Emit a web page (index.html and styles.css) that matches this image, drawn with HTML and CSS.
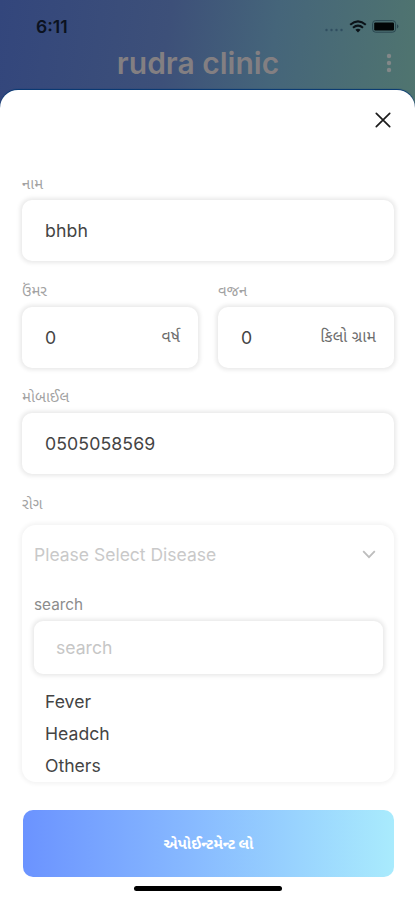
FILE: index.html
```
<!DOCTYPE html>
<html lang="gu">
<head>
<meta charset="utf-8">
<title>rudra clinic</title>
<link rel="stylesheet" href="styles.css">
</head>
<body>
<div class="phone">
  <header class="top">
    <div class="status">
      <span class="time">6:11</span>
      <span class="indicators">
        <svg class="dots" width="20" height="4" viewBox="0 0 20 4"><circle cx="2.5" cy="2" r="1.2"/><circle cx="7.5" cy="2" r="1.2"/><circle cx="12.5" cy="2" r="1.2"/><circle cx="17.5" cy="2" r="1.2"/></svg>
        <svg class="wifi" width="18" height="13" viewBox="0 0 18 13"><path d="M1.2 4.8Q9-2 16.8 4.8M4 7.7q5-4.3 10 0" fill="none" stroke="#0b1218" stroke-width="2.1"/><path d="M6.4 9.8q2.6-2 5.2 0L9 12.4z" fill="#0b1218"/></svg>
        <svg class="battery" width="28" height="13" viewBox="0 0 28 13"><rect x=".6" y=".6" width="23" height="11.6" rx="3" fill="none" stroke="#2a4650"/><rect x="2.2" y="2.4" width="19.8" height="8" rx="1.2" fill="#020506"/><path d="M25 4.2q3 2.2 0 4.4z" fill="#2a4650"/></svg>
      </span>
    </div>
    <div class="titlebar">
      <h1 class="title">rudra clinic</h1>
      <svg class="more" width="6" height="20" viewBox="0 0 6 20"><circle cx="3" cy="3" r="2.2"/><circle cx="3" cy="10" r="2.2"/><circle cx="3" cy="17" r="2.2"/></svg>
    </div>
  </header>
  <main class="sheet">
    <div class="close-row">
      <svg width="16" height="16" viewBox="0 0 16 16"><path d="M1.3 1.3l13.4 13.4M14.7 1.3L1.3 14.7" fill="none" stroke="#1c1c1c" stroke-width="1.7" stroke-linecap="round"/></svg>
    </div>
    <div class="field">
      <label class="label">નામ</label>
      <div class="box"><span class="value">bhbh</span></div>
    </div>
    <div class="pair">
      <div class="field">
        <label class="label">ઉંમર</label>
        <div class="box"><span class="value">0</span><span class="unit">વર્ષ</span></div>
      </div>
      <div class="field">
        <label class="label">વજન</label>
        <div class="box"><span class="value">0</span><span class="unit">કિલો ગ્રામ</span></div>
      </div>
    </div>
    <div class="field">
      <label class="label">મોબાઈલ</label>
      <div class="box"><span class="value">0505058569</span></div>
    </div>
    <label class="label">રોગ</label>
    <section class="dropdown">
      <div class="select">
        <span class="placeholder">Please Select Disease</span>
        <svg width="14" height="9" viewBox="0 0 14 9"><path d="M1.2 1.2L7 7.2l5.8-6" fill="none" stroke="#bdbdbd" stroke-width="1.8"/></svg>
      </div>
      <div class="search-label">search</div>
      <div class="search-box">search</div>
      <ul class="options">
        <li>Fever</li>
        <li>Headch</li>
        <li>Others</li>
      </ul>
    </section>
    <div class="submit">એપોઈન્ટમેન્ટ લો</div>
    <div class="home"></div>
  </main>
</div>
</body>
</html>
```
FILE: styles.css
```
* { box-sizing: border-box; }
body {
  margin: 0;
  font-family: Inter, "Noto Sans Gujarati", "Noto Sans", "Liberation Sans", sans-serif;
  color: #444;
}
.phone {
  width: 415px;
  height: 900px;
  overflow: hidden;
  background: linear-gradient(98deg, #33467c 0, #3d5079 40%, #45657a 65%, #50756f 100%) 0 0 / 100% 112px no-repeat;
}
.top { height: 90px; padding-top: 16px; }
.status {
  display: flex;
  justify-content: space-between;
  align-items: center;
  height: 20px;
  padding: 0 15px 0 36px;
}
.time { font-size: 17.5px; font-weight: 600; color: #0b1220; }
.indicators { display: flex; align-items: center; }
.dots { margin: 8px 5px 0 0; fill: #304e60; }
.wifi { margin-right: 5px; }
.titlebar {
  display: grid;
  grid-template-columns: 1fr auto 1fr;
  align-items: center;
  height: 54px;
  padding: 0 23px 0 4px;
}
.title {
  grid-column: 2;
  margin: 0;
  font-size: 30px;
  font-weight: 600;
  line-height: 54px;
  color: #837f82;
}
.more { justify-self: end; fill: #838889; }
.sheet {
  height: 810px;
  padding: 0 21px 0 22px;
  background: #fff;
  border-radius: 18px 18px 0 0;
  box-shadow: 0 -1px 1px #063873;
}
.close-row {
  display: flex;
  justify-content: flex-end;
  height: 84px;
  padding: 22px 3px 0 0;
}
.label {
  display: block;
  height: 26px;
  font-size: 15px;
  line-height: 19px;
  color: #a2a2a2;
}
.field { height: 106.5px; }
.pair { display: grid; grid-template-columns: 176px 176px; gap: 20px; }
.box {
  display: flex;
  align-items: center;
  justify-content: space-between;
  height: 61px;
  padding: 0 18px 0 23px;
  border-radius: 10px;
  background: #fff;
  box-shadow: 0 0 4px 2px #e9e9e9;
}
.value { font-size: 17.7px; letter-spacing: .1px; }
.unit { font-size: 16px; color: #6c6c6c; }
.dropdown {
  height: 257px;
  margin-top: 5px;
  padding: 0 11px 0 12px;
  border-radius: 14px;
  box-shadow: 0 0 4px 2px #f3f3f3;
}
.select {
  display: flex;
  align-items: center;
  justify-content: space-between;
  height: 60px;
  padding-right: 7px;
}
.placeholder { font-size: 17.5px; color: #c9c9c9; }
.search-label {
  height: 36px;
  padding-top: 10px;
  font-size: 15.3px;
  line-height: 20px;
  color: #8c8c8c;
}
.search-box {
  height: 53px;
  padding-left: 22px;
  border-radius: 9px;
  box-shadow: 0 0 4px 2px #e9e9e9;
  font-size: 17.6px;
  line-height: 54px;
  color: #c6c6c6;
}
.options {
  margin: 12px 0 0;
  padding: 0 0 0 11px;
  list-style: none;
  font-size: 17.6px;
  line-height: 32px;
}
.submit {
  height: 67px;
  margin: 28px 0 0 1px;
  border-radius: 10px;
  background: linear-gradient(90deg, #6b93ff, #87b9ff 45%, #a9ebfd);
  color: #fff;
  font-size: 15px;
  font-weight: 700;
  line-height: 67px;
  text-align: center;
}
.home {
  width: 148px;
  height: 5px;
  margin: 9px auto 0;
  border-radius: 3px;
  background: #000;
}
```
